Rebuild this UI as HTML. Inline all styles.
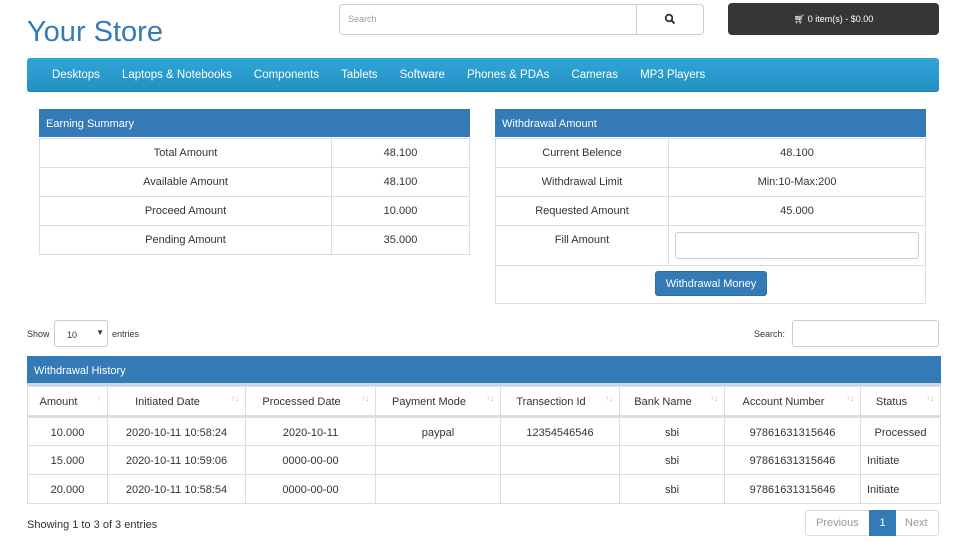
<!DOCTYPE html><html><head><style>
*{box-sizing:border-box;margin:0;padding:0}
body{width:967px;height:560px;background:#fff;font-family:"Liberation Sans",sans-serif;font-size:12px;color:#333;position:relative;overflow:hidden}
.a{position:absolute}
table{border-collapse:collapse;position:absolute;table-layout:fixed}
td,th{border:1px solid #ddd;text-align:center;font-weight:normal;font-size:11px;padding:0}
.hd{background:#337ab7;color:#fff;position:absolute;font-size:11px;padding-left:7px;display:flex;align-items:center}
th{position:relative;padding-right:18px}
th span{position:absolute;right:6px;top:7px;font-size:8px;color:#bbb}
</style></head><body>
<div class="a" style="left:27px;top:16px;font-size:29px;color:#337ab7">Your Store</div>
<div class="a" style="left:339px;top:4px;width:365px;height:31px;border:1px solid #ccc;border-radius:4px"></div>
<div class="a" style="left:348px;top:14px;font-size:9px;color:#999">Search</div>
<div class="a" style="left:636px;top:4px;width:1px;height:31px;background:#ccc"></div>
<svg class="a" style="left:664px;top:13px" width="12" height="12" viewBox="0 0 12 12"><circle cx="5" cy="5" r="3.3" fill="none" stroke="#333" stroke-width="1.8"/><path d="M7.5 7.5L10.5 10.5" stroke="#333" stroke-width="2"/></svg>
<div class="a" style="left:728px;top:3px;width:211px;height:32px;background:#363636;border-radius:4px;color:#fff;font-size:9px;text-align:center;line-height:32px">&#128722;&#xFE0E; 0 item(s) - $0.00</div>
<div class="a" style="left:27px;top:58px;width:912px;height:34px;background:linear-gradient(#2ea6d7,#2490c2);border-radius:3px;border-bottom:1px solid #1f7aa5"></div>
<div class="a" style="left:52px;top:69px;color:#fff;font-size:11.5px"><span style="margin-right:22px">Desktops</span><span style="margin-right:22px">Laptops &amp; Notebooks</span><span style="margin-right:22px">Components</span><span style="margin-right:22px">Tablets</span><span style="margin-right:22px">Software</span><span style="margin-right:22px">Phones &amp; PDAs</span><span style="margin-right:22px">Cameras</span><span>MP3 Players</span></div>

<div class="hd" style="left:39px;top:109px;width:431px;height:28px;padding-top:2px">Earning Summary</div>
<table style="left:39px;top:138px;width:431px"><col style="width:292px"><col>
<tr style="height:29px"><td>Total Amount</td><td>48.100</td></tr>
<tr style="height:29px"><td>Available Amount</td><td>48.100</td></tr>
<tr style="height:29px"><td>Proceed Amount</td><td>10.000</td></tr>
<tr style="height:29px"><td>Pending Amount</td><td>35.000</td></tr></table>

<div class="hd" style="left:495px;top:109px;width:431px;height:28px;padding-top:2px">Withdrawal Amount</div>
<table style="left:495px;top:138px;width:431px"><col style="width:173px"><col>
<tr style="height:29px"><td>Current Belence</td><td>48.100</td></tr>
<tr style="height:29px"><td>Withdrawal Limit</td><td>Min:10-Max:200</td></tr>
<tr style="height:29px"><td>Requested Amount</td><td>45.000</td></tr>
<tr style="height:40px"><td style="vertical-align:top;padding-top:8px">Fill Amount</td><td><div style="margin:0 6px;height:27px;border:1px solid #ccc;border-radius:3px"></div></td></tr>
<tr style="height:38px"><td colspan="2"></td></tr></table>
<div class="a" style="left:655px;top:271px;width:112px;height:25px;background:#337ab7;border:1px solid #2e6da4;border-radius:3px;color:#fff;font-size:11px;text-align:center;line-height:24px">Withdrawal Money</div>

<div class="a" style="left:27px;top:329px;font-size:9px">Show</div>
<div class="a" style="left:54px;top:320px;width:54px;height:27px;border:1px solid #ccc;border-radius:3px;font-size:9px;padding:9px 0 0 12px">10<span style="position:absolute;right:3px;top:7px;font-size:8px">▼</span></div>
<div class="a" style="left:112px;top:329px;font-size:9px">entries</div>
<div class="a" style="left:754px;top:329px;font-size:9px">Search:</div>
<div class="a" style="left:792px;top:320px;width:147px;height:27px;border:1px solid #ccc;border-radius:3px"></div>

<div class="hd" style="left:27px;top:356px;width:914px;height:27px;padding-top:2px">Withdrawal History</div>
<div class="a" style="left:27px;top:383px;width:914px;height:3px;background:#c7d7e8"></div>
<table style="left:27px;top:386px;width:914px"><col style="width:80px"><col style="width:138px"><col style="width:130px"><col style="width:125px"><col style="width:119px"><col style="width:105px"><col style="width:136px"><col>
<tr style="height:30px;border-bottom:3px solid #ddd"><th style="padding-top:2px">Amount<span>↑</span></th><th style="padding-top:2px">Initiated Date<span>↑↓</span></th><th style="padding-top:2px">Processed Date<span>↑↓</span></th><th style="padding-top:2px">Payment Mode<span>↑↓</span></th><th style="padding-top:2px">Transection Id<span>↑↓</span></th><th style="padding-top:2px">Bank Name<span>↑↓</span></th><th style="padding-top:2px">Account Number<span>↑↓</span></th><th style="padding-top:2px">Status<span>↑↓</span></th></tr>
<tr style="height:29px"><td style="padding-top:2px">10.000</td><td style="padding-top:2px">2020-10-11 10:58:24</td><td style="padding-top:2px">2020-10-11</td><td style="padding-top:2px">paypal</td><td style="padding-top:2px">12354546546</td><td style="padding-top:2px">sbi</td><td style="padding-top:2px">97861631315646</td><td style="padding-top:2px">Processed</td></tr>
<tr style="height:29px"><td style="padding-top:2px">15.000</td><td style="padding-top:2px">2020-10-11 10:59:06</td><td style="padding-top:2px">0000-00-00</td><td></td><td></td><td style="padding-top:2px">sbi</td><td style="padding-top:2px">97861631315646</td><td style="text-align:left;padding-left:6px;padding-top:2px">Initiate</td></tr>
<tr style="height:29px"><td style="padding-top:2px">20.000</td><td style="padding-top:2px">2020-10-11 10:58:54</td><td style="padding-top:2px">0000-00-00</td><td></td><td></td><td style="padding-top:2px">sbi</td><td style="padding-top:2px">97861631315646</td><td style="text-align:left;padding-left:6px;padding-top:2px">Initiate</td></tr></table>

<div class="a" style="left:27px;top:519px;font-size:11px">Showing 1 to 3 of 3 entries</div>
<div class="a" style="left:805px;top:510px;width:134px;height:26px;border:1px solid #ddd;border-radius:3px;font-size:11px;color:#999">
<span class="a" style="left:10px;top:6px">Previous</span>
<span class="a" style="left:63px;top:-1px;width:27px;height:26px;background:#337ab7;color:#fff;text-align:center;line-height:26px">1</span>
<span class="a" style="left:99px;top:6px">Next</span></div>
</body></html>
